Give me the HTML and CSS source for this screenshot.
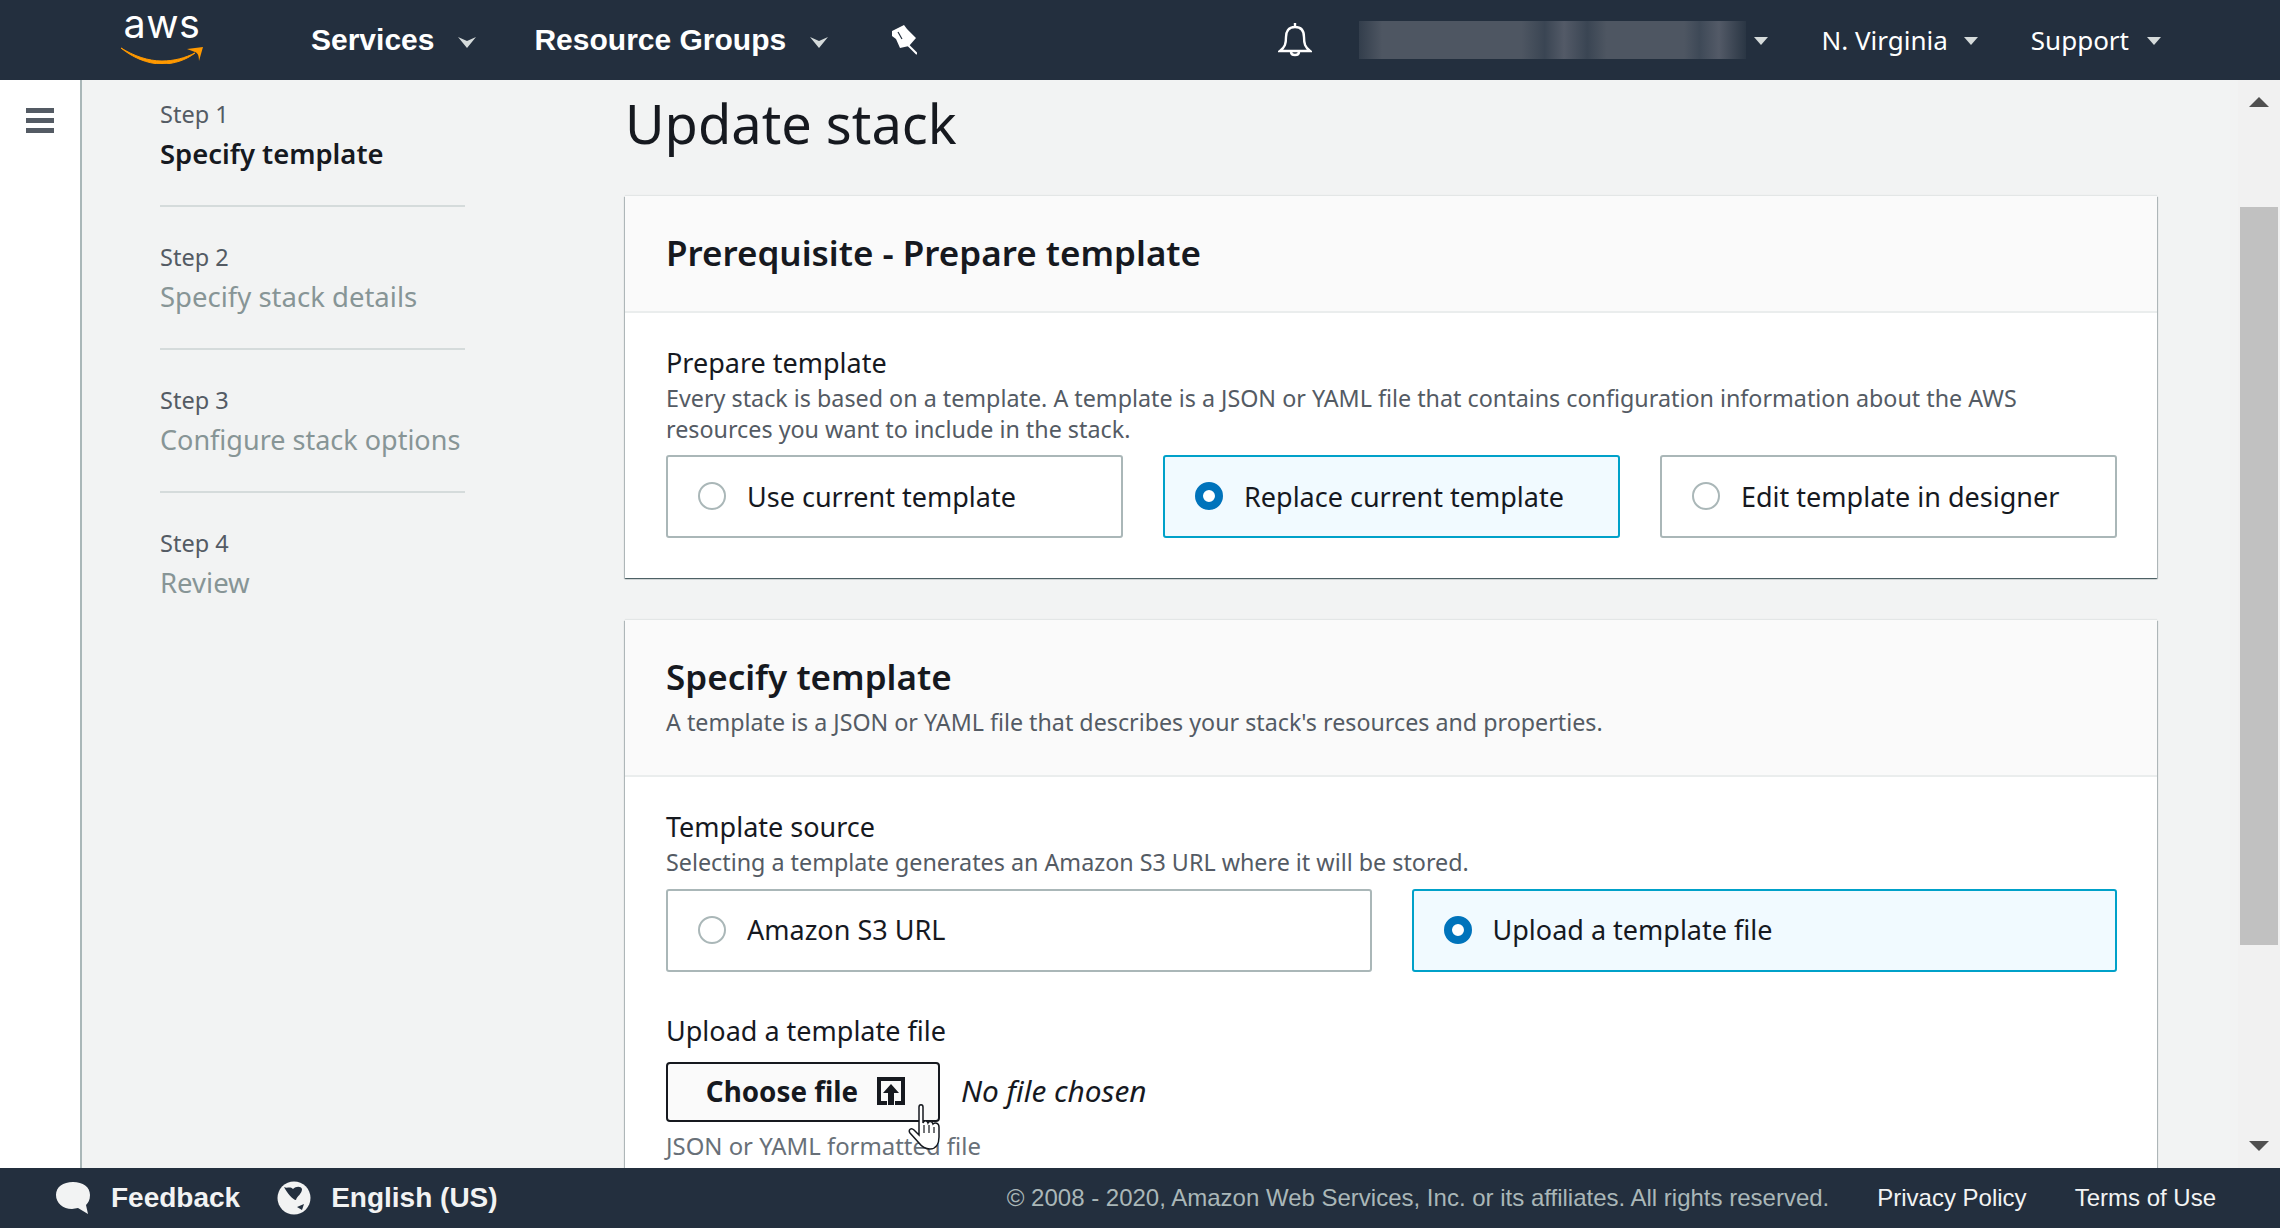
FILE: index.html
```html
<!DOCTYPE html>
<html lang="en">
<head>
<meta charset="utf-8">
<title>Update stack</title>
<link rel="stylesheet" href="styles.css">
</head>
<body>
<header class="topbar">
  <div class="logo">
    <span class="logo-text">aws</span>
    <svg class="logo-smile" width="84" height="18" viewBox="0 0 84 18"><path d="M1 2C14 10 28 15 42 15C54 15 65 12 75 7C66 14 54 18 42 18C27 18 12 11 1 2Z" fill="#f90" stroke="#f90"/><path d="M67 3L83 1L79 15C79 10 78 7 75 6Z" fill="#f90"/></svg>
  </div>
  <nav class="nav-main">
    <span class="nav-item nav-services">Services<svg class="nav-caret" width="18" height="11" viewBox="0 0 18 11"><path d="M0 0L9 4L18 0L9 11Z" fill="#d5dbdb"/></svg></span>
    <span class="nav-item nav-groups">Resource Groups<svg class="nav-caret" width="18" height="11" viewBox="0 0 18 11"><path d="M0 0L9 4L18 0L9 11Z" fill="#d5dbdb"/></svg></span>
    <svg class="pin" width="26" height="30" viewBox="11 11 26 30"><path d="M12 17L24 11L27 15L36 24L29 32L20 34L16 25L12 22Z" fill="#fff"/><path d="M28 31L37 40" stroke="#fff" stroke-width="2"/><path d="M18 18L22 25" stroke="#232f3e" stroke-width="1.2"/></svg>
  </nav>
  <div class="nav-right">
    <svg class="bell" width="34" height="36" viewBox="0 0 34 36"><path d="M17 1V5M17 5C10 5 8 10 8 15C8 22 7 25 2 29H32C27 25 26 22 26 15C26 10 24 5 17 5ZM13 30C13 34 21 34 21 30" fill="none" stroke="#fff" stroke-width="2.4"/></svg>
    <div class="blurred"></div>
    <svg class="small-caret caret-account" width="14" height="8" viewBox="0 0 14 8"><path d="M0 0H14L7 8Z" fill="#d5dbdb"/></svg>
    <span class="nav-link">N. Virginia</span>
    <svg class="small-caret caret-virginia" width="14" height="8" viewBox="0 0 14 8"><path d="M0 0H14L7 8Z" fill="#d5dbdb"/></svg>
    <span class="nav-link nav-support">Support</span>
    <svg class="small-caret caret-support" width="14" height="8" viewBox="0 0 14 8"><path d="M0 0H14L7 8Z" fill="#d5dbdb"/></svg>
  </div>
</header>

<div class="workspace">
  <aside class="rail">
    <div class="burger"><i></i><i></i><i></i></div>
  </aside>

  <ol class="steps">
    <li class="step step-current"><small>Step 1</small><b>Specify template</b></li>
    <li class="step"><small>Step 2</small><span>Specify stack details</span></li>
    <li class="step"><small>Step 3</small><span class="step-long">Configure stack options</span></li>
    <li class="step step-last"><small>Step 4</small><span>Review</span></li>
  </ol>

  <main class="content">
    <h1>Update stack</h1>

    <section class="card">
      <div class="card-head card-head-plain"><h2>Prerequisite - Prepare template</h2></div>
      <div class="card-body">
        <div class="label">Prepare template</div>
        <p class="hint">Every stack is based on a template. A template is a JSON or YAML file that contains configuration information about the AWS<br>resources you want to include in the stack.</p>
        <div class="choices choices-3">
          <div class="choice"><span class="radio"></span>Use current template</div>
          <div class="choice choice-on"><span class="radio"></span>Replace current template</div>
          <div class="choice"><span class="radio"></span>Edit template in designer</div>
        </div>
      </div>
    </section>

    <section class="card card-second">
      <div class="card-head"><h2>Specify template</h2><p class="hint">A template is a JSON or YAML file that describes your stack's resources and properties.</p></div>
      <div class="card-body card-body-second">
        <div class="label">Template source</div>
        <p class="hint hint-source">Selecting a template generates an Amazon S3 URL where it will be stored.</p>
        <div class="choices choices-2">
          <div class="choice"><span class="radio"></span>Amazon S3 URL</div>
          <div class="choice choice-on"><span class="radio"></span>Upload a template file</div>
        </div>
        <div class="label label-upload">Upload a template file</div>
        <div class="file-row">
          <div class="file-btn">Choose file
            <svg width="28" height="28" viewBox="0 0 28 28"><path d="M10 26H2V2H26V26H18" fill="none" stroke="#16191f" stroke-width="4"/><path d="M14 7L22 16H17V28H11V16H6Z" fill="#16191f"/></svg>
            <svg class="cursor" width="34" height="46" viewBox="0 0 34 46"><path d="M11 3C11 0 15 0 15 3V19C16 16 19 16 20 19C21 17 24 17 25 20C27 18 31 19 31 23V33C31 40 28 45 22 45C17 45 14 43 11 39L2 29C0 26 3 23 6 26L11 31Z" fill="#fff" stroke="#16191f" stroke-width="1.5"/><path d="M16 21V29M21 21V29M26 23V29" stroke="#16191f" stroke-width="1.2"/></svg>
          </div>
          <em>No file chosen</em>
        </div>
        <p class="hint hint-file">JSON or YAML formatted file</p>
      </div>
    </section>
  </main>

  <div class="scrollbar">
    <svg width="20" height="10" viewBox="0 0 20 10"><path d="M0 10L10 0L20 10Z" fill="#505050"/></svg>
    <div class="thumb"></div>
    <svg width="20" height="10" viewBox="0 0 20 10"><path d="M0 0L20 0L10 10Z" fill="#505050"/></svg>
  </div>
</div>

<footer class="footer">
  <div class="foot-left">
    <svg width="36" height="34" viewBox="0 0 36 34"><path d="M18 1C28 1 35 6 35 14C35 19 33 22 31 24L33 33L23 27C21 27 19 28 17 28C8 28 1 22 1 14C1 6 8 1 18 1Z" fill="#f2f3f3"/></svg>
    <span class="foot-strong foot-feedback">Feedback</span>
    <svg width="34" height="34" viewBox="0 0 34 34"><circle cx="17" cy="17" r="16.5" fill="#f2f3f3"/><path d="M7 6C10 8 13 5 16 8C19 5 24 5 25 8C25 13 20 15 19 19C16 19 10 12 7 6Z M20 26L27 23L25 29Z" fill="#232f3e"/></svg>
    <span class="foot-strong">English (US)</span>
  </div>
  <div class="foot-right">
    <span class="copyright">© 2008 - 2020, Amazon Web Services, Inc. or its affiliates. All rights reserved.</span>
    <span>Privacy Policy</span>
    <span>Terms of Use</span>
  </div>
</footer>
</body>
</html>
```

FILE: styles.css
```css
* { box-sizing: border-box; }
html, body { margin: 0; height: 100%; }
body {
  display: flex;
  flex-direction: column;
  height: 100vh;
  overflow: hidden;
  background: #f2f3f3;
  color: #16191f;
  font-family: "Noto Sans", "Open Sans", sans-serif;
}

/* top bar */
.topbar {
  flex: 0 0 80px;
  display: flex;
  align-items: center;
  background: #232f3e;
  color: #fff;
  padding-left: 120px;
}
.logo { width: 84px; height: 66px; align-self: flex-start; display: flex; flex-direction: column; align-items: center; }
.logo-text { font: 39.5px/48px "Inter", sans-serif; color: #fff; letter-spacing: 0.5px; }
.logo-smile { flex: none; margin-top: -2px; }
.nav-main { display: flex; align-items: center; margin-left: 107px; font: bold 30px "Liberation Sans", sans-serif; }
.nav-item { display: flex; align-items: center; }
.nav-caret { margin-left: 24px; margin-top: 4px; }
.nav-services { margin-right: 58px; }
.pin { margin-left: 63px; }
.nav-right {
  margin-left: auto;
  display: flex;
  align-items: center;
  padding-right: 119px;
  font-size: 26px;
}
.bell { margin-right: 47px; }
.blurred {
  width: 387px;
  height: 38px;
  background: linear-gradient(90deg, #333e4c, #4e5662 6%, #4e5662 42%, #3a4553 48%, #535a67 53%, #3a4553 59%, #4e5662 64%, #4e5662 84%, #3e4957 88%, #535a67 93%, #2a3644);
}
.small-caret { margin-top: 2px; }
.caret-account { margin-left: 8px; margin-right: 53px; }
.caret-virginia { margin-left: 16px; }
.caret-support { margin-left: 18px; }
.nav-support { margin-left: 53px; }

/* layout */
.workspace { flex: 1; display: flex; min-height: 0; }
.rail {
  flex: 0 0 82px;
  background: #fff;
  border-right: 2px solid #aab7b8;
  padding: 28px 0 0 26px;
}
.burger { display: flex; flex-direction: column; gap: 5px; width: 28px; }
.burger i { display: block; height: 5px; background: #545b64; }

.steps {
  flex: 0 0 305px;
  margin: 0 0 0 78px;
  padding: 19px 0 0;
  list-style: none;
}
.step {
  height: 143px;
  border-bottom: 2px solid #d5dbdb;
  display: flex;
  flex-direction: column;
  white-space: nowrap;
}
.step + .step { padding-top: 35px; }
.step-last { border-bottom: 0; }
.step small { font-size: 23.5px; line-height: 30px; color: #545b64; }
.step b { font-size: 27.4px; line-height: 40px; margin-top: 5px; font-weight: 600; }
.step span { font-size: 27.5px; line-height: 40px; margin-top: 5px; color: #879596; }
.step .step-long { font-size: 27px; }
.step-current { height: 108px; }

.content { flex: 0 0 1537px; margin-left: 158px; padding: 0 2px; overflow: hidden; }
h1 { margin: 0; padding: 3px 0 0; font-size: 54.2px; font-weight: 400; line-height: 80px; height: 116px; }

.card {
  background: #fff;
  width: 1532px;
  box-shadow: 0 -1px 1px 0 rgba(0,28,36,.06), 0 1px 1px 0 rgba(0,28,36,.5), 1px 1px 1px 0 rgba(0,28,36,.2), -1px 1px 1px 0 rgba(0,28,36,.2);
}
.card-second { margin-top: 42px; }
.card-head {
  padding: 33px 40px 0 41px;
  background: #fafafa;
  border-bottom: 2px solid #eaeded;
  height: 157px;
}
.card-head-plain { height: 117px; }
h2 { margin: 0; font-size: 35px; line-height: 48px; font-weight: 600; }
.card-body { padding: 32px 40px 40px 41px; }
.card-body-second { padding-bottom: 90px; }
.label { font-size: 27px; line-height: 36px; }
.hint { margin: 2px 0 0; font-size: 23.3px; line-height: 30.5px; color: #545b64; }
.card-head .hint { margin-top: 6px; font-size: 23.25px; }
.hint-file { color: #687078; margin-top: 9px; font-size: 23.9px; }
.choices { display: grid; gap: 40px; margin-top: 11px; }
.choices-3 { grid-template-columns: repeat(3, 1fr); }
.choices-2 { grid-template-columns: repeat(2, 1fr); }
.hint-source { margin-bottom: 1px; }
.choice {
  height: 83px;
  display: flex;
  align-items: center;
  padding: 0 0 1px 30px;
  font-size: 27px;
  background: #fff;
  border: 2px solid #aab7b8;
  border-radius: 3px;
}
.choice-on { background: #f1faff; border-color: #00a1c9; }
.radio {
  flex: 0 0 28px;
  height: 28px;
  border-radius: 50%;
  border: 2px solid #aab7b8;
  margin-right: 21px;
}
.choice-on .radio { border: 8px solid #0073bb; background: #fff; }
.label-upload { margin-top: 41px; }
.file-row { display: flex; align-items: center; margin-top: 13px; }
.file-row em { font-size: 29.8px; margin: 0 0 2px 21px; }
.file-btn {
  position: relative;
  width: 274px;
  height: 60px;
  padding: 0 0 2px 5px;
  display: flex;
  align-items: center;
  justify-content: center;
  gap: 19px;
  background: #fafafa;
  border: 2px solid #16191f;
  border-radius: 4px;
  font-size: 27.8px;
  font-weight: 700;
}
.cursor { position: absolute; left: 240px; top: 40px; }

.scrollbar {
  flex: 0 0 42px;
  margin-left: auto;
  background: #f1f1f1;
  display: flex;
  flex-direction: column;
  align-items: center;
  padding-top: 17px;
}
.thumb { width: 38px; height: 738px; background: #c1c1c1; margin: 100px 0 196px; flex: none; }

/* footer */
.footer {
  flex: 0 0 60px;
  display: flex;
  align-items: center;
  justify-content: space-between;
  background: #232f3e;
  font-family: "Liberation Sans", sans-serif;
  padding: 0 64px 0 55px;
}
.foot-left { display: flex; align-items: center; color: #f2f3f3; }
.foot-strong { font-size: 28px; font-weight: 700; margin-left: 20px; }
.foot-feedback { margin-right: 37px; }
.foot-right { display: flex; gap: 48px; font-size: 24px; color: #f2f3f3; }
.copyright { color: #aab7b8; }
```
